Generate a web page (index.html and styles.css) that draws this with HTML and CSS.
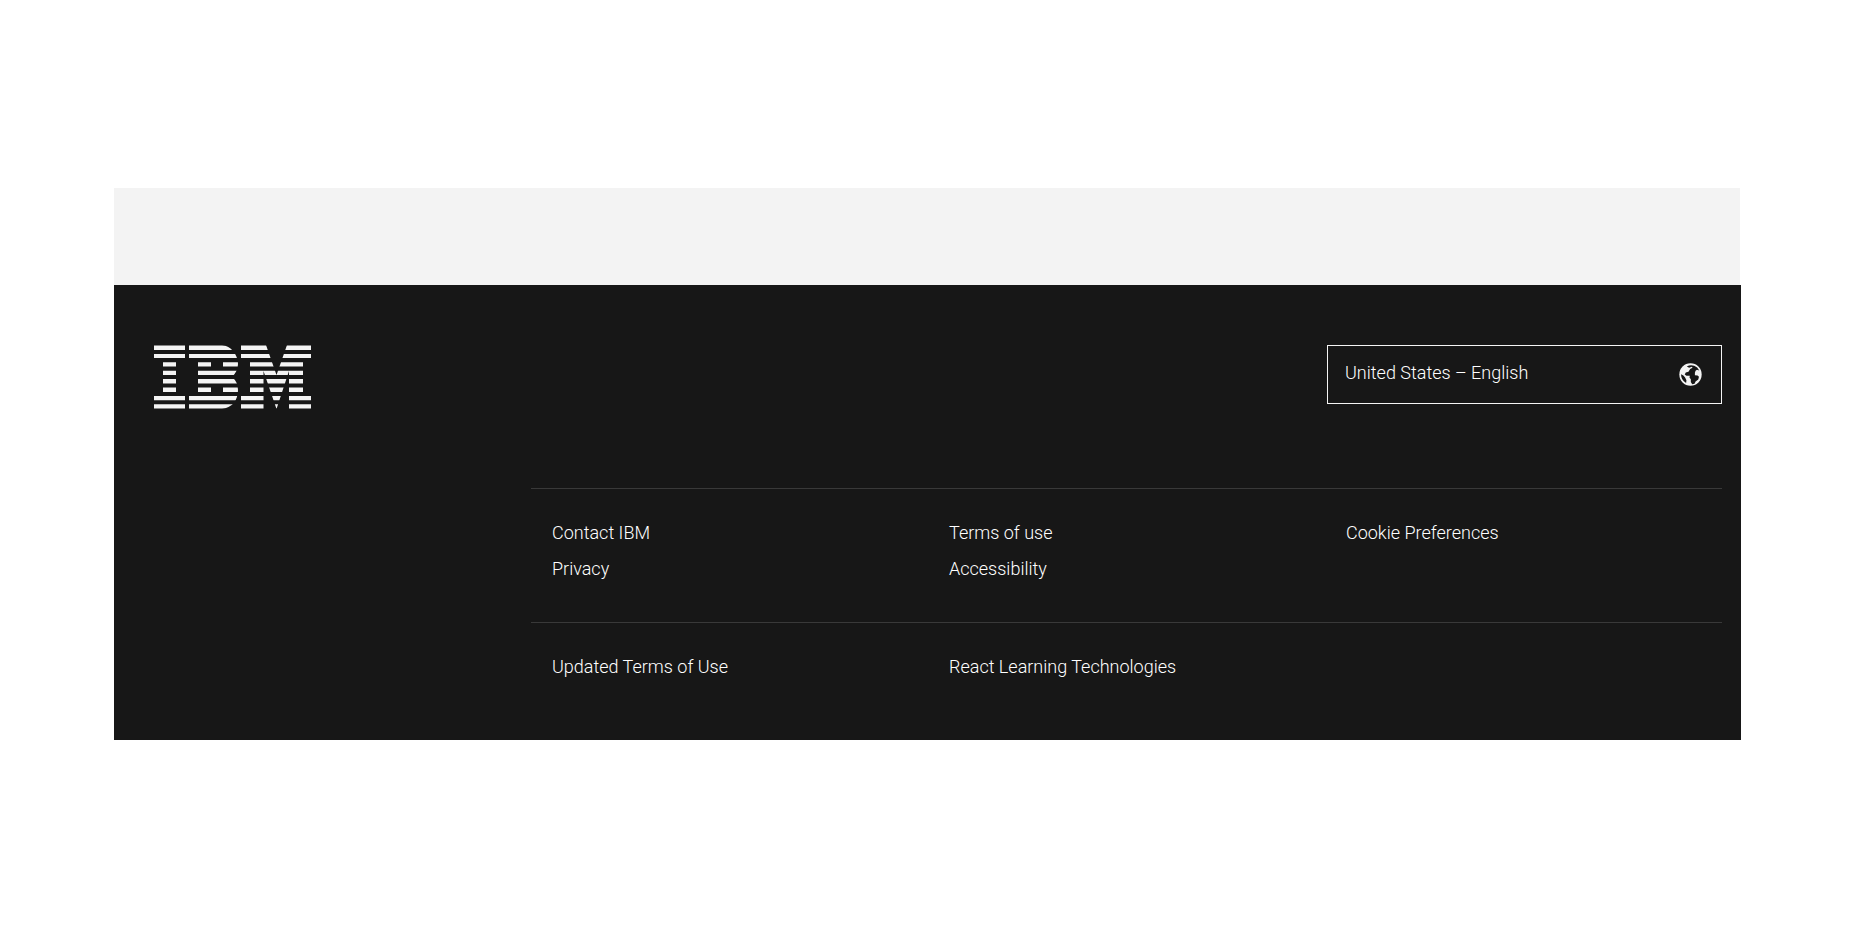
FILE: index.html
```html
<!DOCTYPE html>
<html lang="en">
<head>
<meta charset="utf-8">
<title>IBM footer</title>
<link rel="stylesheet" href="styles.css">
</head>
<body>
<main class="page">
  <div class="content-end"></div>
  <footer class="footer">
    <div class="footer-top">
      <a class="logo" href="#" aria-label="IBM">
        <svg viewBox="0 0 157 64" width="157" height="64" fill="#f4f4f4" aria-hidden="true">
          <defs>
            <clipPath id="stripes">
              <path d="M0 .4h158v4.500H0zM0 8.900h158v4.200H0zM0 17.300h158v4.300H0zM0 25.700h158v4.300H0zM0 34h158v4.500H0zM0 42.400h158v4.500H0zM0 50.900h158v4.300H0zM0 59.200h158V63.600H0z"/>
            </clipPath>
          </defs>
          <g clip-path="url(#stripes)">
            <path d="M0 0h31v15H22v34h9v15H0V49h9V15H0z"/>
            <path fill-rule="evenodd" d="M35 0h33Q75 1 79 6Q84 12 84 19Q84 26 78 32Q84 37 84 45Q84 52 80 58Q75 63 68 64H35V49h9V15h-9zM57 15v9h12v-9zM57 40v9h12v-9z"/>
            <path d="M87 0h25l10.500 30L133 0h24v15h-8v34h8v15h-22V26L122.500 64L109.500 26v38H87V49h9V15h-9z"/>
          </g>
        </svg>
      </a>
      <button class="locale" type="button">
        <span>United States – English</span>
        <svg class="globe" viewBox="0 0 68 68" width="23" height="23" aria-hidden="true">
          <circle cx="34" cy="34" r="33" fill="#f4f4f4"/>
          <path fill="#171717" d="M23 10Q33 5 45 8Q55 12 60 22L53 20L49 23L47 29L47 36L55 37L59 41L57 49L49 55L46 61L39 63L35 56L35 48L31 43L32 38L22 38L17 34L20 28L28 26L33 18L40 14L38 11L30 14zM6 33L13 37L18 43L22 51L21 59Q6 50 6 33z"/>
        </svg>
      </button>
    </div>
    <nav class="links" aria-label="Legal">
      <ul class="link-row">
        <li><a href="#">Contact IBM</a></li>
        <li><a href="#">Terms of use</a></li>
        <li><a href="#">Cookie Preferences</a></li>
        <li><a href="#">Privacy</a></li>
        <li><a href="#">Accessibility</a></li>
      </ul>
      <ul class="link-row">
        <li><a href="#">Updated Terms of Use</a></li>
        <li><a href="#">React Learning Technologies</a></li>
      </ul>
    </nav>
  </footer>
</main>
</body>
</html>
```
FILE: styles.css
```css
* {
  box-sizing: border-box;
}

body {
  margin: 0;
  background: #fff;
  font-family: Roboto, "Noto Sans", sans-serif;
  font-size: 18px;
  font-weight: 300;
  line-height: 24px;
}

.page {
  padding: 188px 115px 188px 114px;
}

.content-end {
  height: 97px;
  margin-right: 1px;
  background: #f3f3f3;
}

.footer {
  padding: 60px 19px 61px 20px;
  background: #171717;
  color: #fff;
}

.footer-top {
  display: grid;
  grid-template-columns: repeat(4, 1fr);
  align-items: start;
}

.logo {
  display: block;
  padding-left: 20px;
}

.logo svg {
  display: block;
}

.locale {
  grid-column: 4;
  display: flex;
  align-items: center;
  justify-content: space-between;
  height: 59px;
  margin-left: 2px;
  padding: 0 19px 0 17px;
  border: 1px solid #f4f4f4;
  border-radius: 0;
  background: none;
  color: inherit;
  font: inherit;
}

.locale span {
  padding-bottom: 3px;
}

.links {
  display: grid;
  margin: 79px 0 0 25%;
}

.link-row {
  display: grid;
  grid-template-columns: repeat(3, 1fr);
  row-gap: 12px;
  margin: 0;
  padding: 32px 0 41px;
  border-top: 1px solid #393939;
  list-style: none;
}

.link-row li {
  padding-left: 21px;
}

.link-row a {
  color: inherit;
  text-decoration: none;
}

.link-row:last-child {
  padding-bottom: 0;
}
```
